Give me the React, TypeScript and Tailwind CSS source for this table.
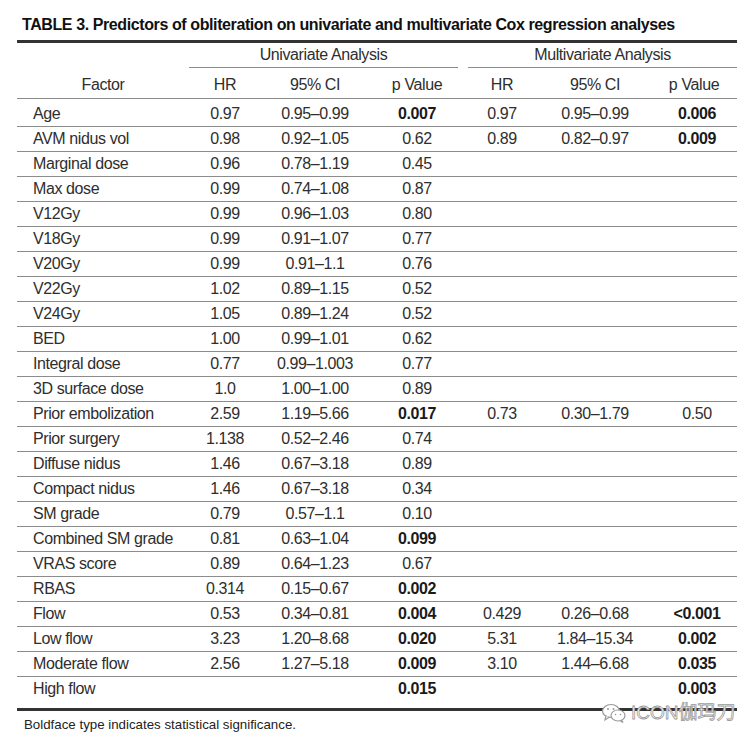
import React from "react";

type Row = {
  factor: string;
  hr: string;
  ci: string;
  p: string;
  pBold?: boolean;
  mhr?: string;
  mci?: string;
  mp?: string;
  mpBold?: boolean;
};

const rows: Row[] = [
  { factor: "Age", hr: "0.97", ci: "0.95–0.99", p: "0.007", pBold: true, mhr: "0.97", mci: "0.95–0.99", mp: "0.006", mpBold: true },
  { factor: "AVM nidus vol", hr: "0.98", ci: "0.92–1.05", p: "0.62", mhr: "0.89", mci: "0.82–0.97", mp: "0.009", mpBold: true },
  { factor: "Marginal dose", hr: "0.96", ci: "0.78–1.19", p: "0.45" },
  { factor: "Max dose", hr: "0.99", ci: "0.74–1.08", p: "0.87" },
  { factor: "V12Gy", hr: "0.99", ci: "0.96–1.03", p: "0.80" },
  { factor: "V18Gy", hr: "0.99", ci: "0.91–1.07", p: "0.77" },
  { factor: "V20Gy", hr: "0.99", ci: "0.91–1.1", p: "0.76" },
  { factor: "V22Gy", hr: "1.02", ci: "0.89–1.15", p: "0.52" },
  { factor: "V24Gy", hr: "1.05", ci: "0.89–1.24", p: "0.52" },
  { factor: "BED", hr: "1.00", ci: "0.99–1.01", p: "0.62" },
  { factor: "Integral dose", hr: "0.77", ci: "0.99–1.003", p: "0.77" },
  { factor: "3D surface dose", hr: "1.0", ci: "1.00–1.00", p: "0.89" },
  { factor: "Prior embolization", hr: "2.59", ci: "1.19–5.66", p: "0.017", pBold: true, mhr: "0.73", mci: "0.30–1.79", mp: "0.50" },
  { factor: "Prior surgery", hr: "1.138", ci: "0.52–2.46", p: "0.74" },
  { factor: "Diffuse nidus", hr: "1.46", ci: "0.67–3.18", p: "0.89" },
  { factor: "Compact nidus", hr: "1.46", ci: "0.67–3.18", p: "0.34" },
  { factor: "SM grade", hr: "0.79", ci: "0.57–1.1", p: "0.10" },
  { factor: "Combined SM grade", hr: "0.81", ci: "0.63–1.04", p: "0.099", pBold: true },
  { factor: "VRAS score", hr: "0.89", ci: "0.64–1.23", p: "0.67" },
  { factor: "RBAS", hr: "0.314", ci: "0.15–0.67", p: "0.002", pBold: true },
  { factor: "Flow", hr: "0.53", ci: "0.34–0.81", p: "0.004", pBold: true, mhr: "0.429", mci: "0.26–0.68", mp: "<0.001", mpBold: true },
  { factor: "Low flow", hr: "3.23", ci: "1.20–8.68", p: "0.020", pBold: true, mhr: "5.31", mci: "1.84–15.34", mp: "0.002", mpBold: true },
  { factor: "Moderate flow", hr: "2.56", ci: "1.27–5.18", p: "0.009", pBold: true, mhr: "3.10", mci: "1.44–6.68", mp: "0.035", mpBold: true },
  { factor: "High flow", hr: "", ci: "", p: "0.015", pBold: true, mp: "0.003", mpBold: true },
];

const cols = "grid grid-cols-[172px_72px_108px_96px_74px_112px_86px]";
const narrow = "font-['Liberation_Sans_Narrow','Arial_Narrow','Liberation_Sans',sans-serif] tracking-[-0.4px]";

function WeChatMark() {
  return (
    <svg width="26" height="20" viewBox="0 0 26 20" fill="none">
      <ellipse cx="10" cy="8" rx="8.5" ry="6.5" fill="white" stroke="#9a9a9a" strokeWidth="1.2" />
      <path d="M5 13 L4 17 L8.5 14" fill="white" stroke="#9a9a9a" strokeWidth="1.2" />
      <ellipse cx="17" cy="12.5" rx="7" ry="5.5" fill="white" stroke="#9a9a9a" strokeWidth="1.2" />
      <path d="M20.5 17 L22 19.5 L19 17.6" fill="white" stroke="#9a9a9a" strokeWidth="1.2" />
      <circle cx="7" cy="6" r="1" fill="#9a9a9a" />
      <circle cx="12.5" cy="6" r="1" fill="#9a9a9a" />
      <circle cx="14.5" cy="11.5" r="0.8" fill="#9a9a9a" />
      <circle cx="19.5" cy="11.5" r="0.8" fill="#9a9a9a" />
    </svg>
  );
}

export default function App() {
  return (
    <div className="relative h-[743px] w-[756px] bg-white text-[#2e2e2e]">
      <div className={`${narrow} pl-[22px] pt-[15px] pb-[5px] text-[16px] leading-[20px] font-bold text-[#111]`}>
        TABLE 3. Predictors of obliteration on univariate and multivariate Cox regression analyses
      </div>

      <div className={`${narrow} ml-[17px] w-[720px] border-t-[3px] border-[#333] text-[16px]`}>
        {/* group header */}
        <div className={`${cols} h-[24px] leading-[24px]`}>
          <div />
          <div className="col-span-3 mr-[7px] border-b border-[#8c8c8c] text-center">Univariate Analysis</div>
          <div className="col-span-3 ml-[3px] border-b border-[#8c8c8c] text-center">Multivariate Analysis</div>
        </div>

        {/* column header */}
        <div className={`${cols} h-[32px] border-b border-[#8c8c8c] pt-[6px] leading-[24px]`}>
          <div className="text-center">Factor</div>
          <div className="text-center">HR</div>
          <div className="text-center">95% CI</div>
          <div className="text-center">p Value</div>
          <div className="text-center">HR</div>
          <div className="text-center">95% CI</div>
          <div className="text-center">p Value</div>
        </div>

        {rows.map((r, i) => {
          const first = i === 0;
          const last = i === rows.length - 1;
          return (
            <div
              key={r.factor}
              className={`${cols} leading-[24px] ${
                first ? "h-[28px] pt-[3px] border-b border-[#8c8c8c]" : last ? "h-[31px]" : "h-[25px] border-b border-[#8c8c8c]"
              }`}
            >
              <div className="pl-[16px] whitespace-nowrap">{r.factor}</div>
              <div className="text-center">{r.hr}</div>
              <div className="text-center">{r.ci}</div>
              <div className={`text-center ${r.pBold ? "font-bold text-[#1a1a1a]" : ""}`}>{r.p}</div>
              <div className="text-center">{r.mhr}</div>
              <div className="text-center">{r.mci}</div>
              <div className={`pl-[6px] text-center ${r.mpBold ? "font-bold text-[#1a1a1a]" : ""}`}>{r.mp}</div>
            </div>
          );
        })}

        <div className="border-t-[3px] border-[#333]" />
      </div>

      <div className="pl-[24px] pt-[6px] font-['Liberation_Sans',Arial,sans-serif] text-[13.3px] leading-[16px] text-[#222]">
        Boldface type indicates statistical significance.
      </div>

      {/* watermark */}
      <div className="absolute left-[601px] top-[702px] flex items-center gap-[4px]">
        <WeChatMark />
        <span className="font-['Liberation_Sans','Noto_Sans_CJK_SC',sans-serif] text-[19px] leading-[22px] text-white [-webkit-text-stroke:0.8px_#9a9a9a]">
          ICON伽玛刀
        </span>
      </div>
    </div>
  );
}
